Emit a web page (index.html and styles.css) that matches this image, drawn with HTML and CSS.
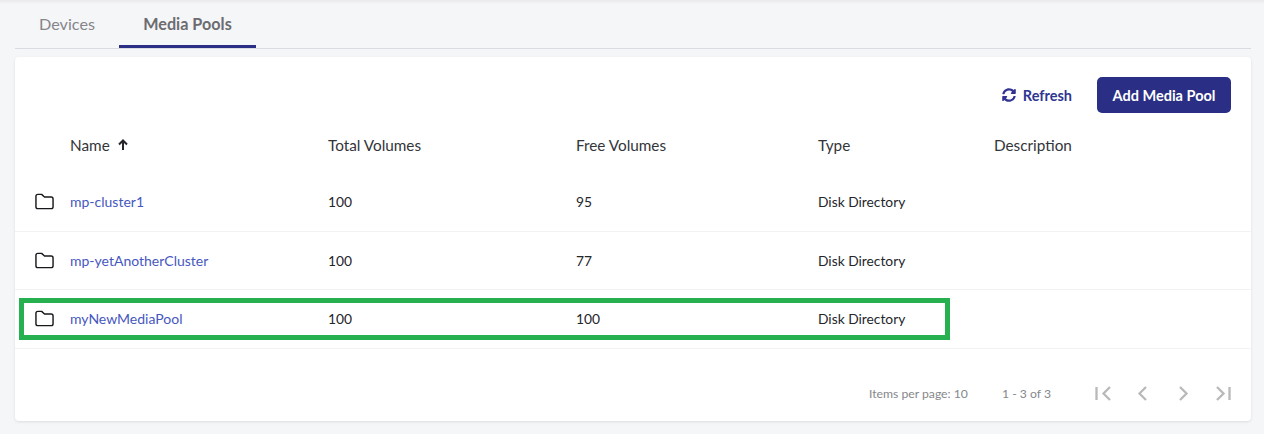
FILE: index.html
```html
<!DOCTYPE html>
<html lang="en">
<head>
<meta charset="utf-8">
<title>Media Pools</title>
<link rel="stylesheet" href="styles.css">
</head>
<body>
<div class="page">
  <nav class="tabs">
    <a class="tab">Devices</a>
    <a class="tab active">Media Pools</a>
  </nav>
  <section class="card">
    <div class="toolbar">
      <button class="refresh">
        <svg class="refresh-icon" viewBox="0 0 512 512" aria-hidden="true"><path d="M370.7 133.3C339.5 104 298.9 88 255.8 88c-77.5.1-144.3 53.2-162.8 126.9-1.3 5.4-6.1 9.2-11.7 9.2H24.1c-7.5 0-13.2-6.8-11.8-14.2C33.9 94.9 134.8 8 256 8c66.4 0 126.8 26.1 171.3 68.7L463 41c15.1-15.1 41-4.4 41 17V192c0 13.3-10.7 24-24 24H345.9c-21.4 0-32.1-25.9-17-41l41.8-41.700zM32 296h134.100c21.400 0 32.100 25.900 17 41l-41.800 41.800c31.300 29.300 71.800 45.300 114.900 45.200 77.400-.1 144.300-53.100 162.800-126.800 1.300-5.400 6.100-9.200 11.700-9.200h57.300c7.500 0 13.200 6.800 11.800 14.200C478.100 417.100 377.200 504 256 504c-66.400 0-126.800-26.100-171.300-68.700L49 471c-15.100 15.100-41 4.400-41-17V320c0-13.300 10.700-24 24-24z"/></svg>
        Refresh
      </button>
      <button class="add">Add Media Pool</button>
    </div>
    <div class="row head">
      <span></span>
      <span class="name-head">Name
        <svg class="arrow" viewBox="0 0 12 12" aria-hidden="true"><path d="M6 11V2M2 5.500 6 1.500l4 4"/></svg>
      </span>
      <span>Total Volumes</span>
      <span>Free Volumes</span>
      <span>Type</span>
      <span>Description</span>
    </div>
    <div class="row item">
      <svg class="folder" viewBox="0 0 20 17" aria-hidden="true"><path d="M1 3a2 2 0 0 1 2-2h4l3 2.800h7a2 2 0 0 1 2 2V14a2 2 0 0 1-2 2H3a2 2 0 0 1-2-2z"/></svg>
      <a class="pool">mp-cluster1</a><span>100</span><span>95</span><span>Disk Directory</span><span></span>
    </div>
    <div class="row item">
      <svg class="folder" viewBox="0 0 20 17" aria-hidden="true"><path d="M1 3a2 2 0 0 1 2-2h4l3 2.800h7a2 2 0 0 1 2 2V14a2 2 0 0 1-2 2H3a2 2 0 0 1-2-2z"/></svg>
      <a class="pool">mp-yetAnotherCluster</a><span>100</span><span>77</span><span>Disk Directory</span><span></span>
    </div>
    <div class="row item">
      <svg class="folder" viewBox="0 0 20 17" aria-hidden="true"><path d="M1 3a2 2 0 0 1 2-2h4l3 2.800h7a2 2 0 0 1 2 2V14a2 2 0 0 1-2 2H3a2 2 0 0 1-2-2z"/></svg>
      <a class="pool">myNewMediaPool</a><span>100</span><span>100</span><span>Disk Directory</span><span></span>
      <div class="highlight"></div>
    </div>
    <footer class="pager">
      <span class="per-page">Items per page: 10</span>
      <span class="range">1 - 3 of 3</span>
      <div class="pager-icons">
        <svg viewBox="0 0 20 20" aria-hidden="true"><path d="M3.500 4v13M17 4l-6.500 6.500L17 17"/></svg>
        <svg viewBox="0 0 20 20" aria-hidden="true"><path d="M13 4l-6.500 6.500L13 17"/></svg>
        <svg viewBox="0 0 20 20" aria-hidden="true"><path d="M7 4l6.500 6.500L7 17"/></svg>
        <svg viewBox="0 0 20 20" aria-hidden="true"><path d="M16.500 4v13M4 4l6.500 6.500L4 17"/></svg>
      </div>
    </footer>
  </section>
</div>
</body>
</html>
```
FILE: styles.css
```css
* { box-sizing: border-box; }
html, body { margin: 0; height: 100%; }
body {
  background: #f5f6f8;
  font-family: "Lato", "Open Sans", sans-serif;
  color: #24262b;
  overflow: hidden;
}
.page {
  padding: 0 13px 0 15px;
  height: 434px;
  background: linear-gradient(#e9e9ec, #f5f6f8 4px);
}
.tabs {
  display: flex;
  height: 49px;
  border-bottom: 1px solid #d9dae2;
}
.tab {
  width: 137px;
  height: 48px;
  padding-top: 15px;
  font-size: 16.200px;
  line-height: 18px;
  color: #85858a;
  text-align: center;
}
.tab:first-child { width: 104px; padding-right: 24px; text-align: right; }
.tab.active {
  color: #6c6c70;
  font-weight: 700;
  border-bottom: 3px solid #2a2f85;
}
.card {
  margin-top: 8px;
  height: 364px;
  background: #fff;
  border-radius: 4px;
  box-shadow: 0 1px 3px rgba(0, 0, 0, .1);
}
.toolbar {
  display: flex;
  justify-content: flex-end;
  align-items: center;
  gap: 25px;
  padding: 20px 20px 0 0;
  height: 56px;
}
button { font-family: inherit; border: 0; cursor: pointer; }
.refresh {
  display: flex;
  align-items: center;
  gap: 7px;
  padding: 0;
  background: none;
  color: #2f3590;
  font-size: 14.500px;
  font-weight: 700;
}
.refresh-icon { width: 14px; height: 14px; fill: #2f3590; }
.add {
  width: 134px;
  height: 36px;
  background: #2a2f85;
  color: #fff;
  border-radius: 5px;
  font-size: 14.500px;
  font-weight: 700;
}
.row {
  position: relative;
  display: grid;
  grid-template-columns: 55px 258px 248px 242px 176px 1fr;
  align-items: center;
  font-size: 13.800px;
}
.row > :first-child { justify-self: end; margin-right: 16px; }
.head {
  height: 60px;
  padding-top: 4px;
  font-size: 15.300px;
  color: #33353a;
}
.name-head { display: flex; align-items: center; gap: 7px; }
.arrow { width: 12px; height: 12px; fill: none; stroke: #24262b; stroke-width: 2; }
.item {
  height: 58.500px;
  border-bottom: 1px solid #f2f2f4;
}
.pool { color: #4657c0; font-size: 14px; }
.folder {
  width: 19px;
  height: 17px;
  fill: none;
  stroke: #16181c;
  stroke-width: 1.500;
  stroke-linejoin: round;
}
.highlight {
  position: absolute;
  left: 4px;
  top: 8px;
  width: 931px;
  height: 42px;
  border: 5px solid #27b04f;
}
.pager {
  display: flex;
  align-items: center;
  height: 89px;
  padding-left: 854px;
  font-size: 12.200px;
  color: #85878c;
}
.per-page { width: 133px; }
.range { width: 91px; font-size: 12.200px; }
.pager-icons { display: flex; gap: 20px; }
.pager-icons svg {
  width: 20px;
  height: 20px;
  fill: none;
  stroke: #b9b9bb;
  stroke-width: 2.300;
}
```
